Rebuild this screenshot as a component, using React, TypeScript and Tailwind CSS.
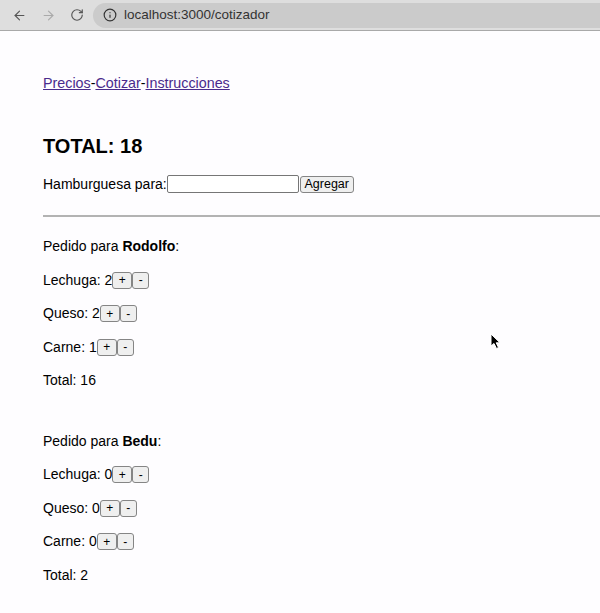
import { ArrowLeft, ArrowRight, RotateCw, Info } from "lucide-react";

type Pedido = {
    nombre: string;
    lechuga: number;
    queso: number;
    carne: number;
    total: number;
};

const pedidos: Pedido[] = [
    { nombre: "Rodolfo", lechuga: 2, queso: 2, carne: 1, total: 16 },
    { nombre: "Bedu", lechuga: 0, queso: 0, carne: 0, total: 2 },
];

function Btn({ label, w }: { label: string; w: string }) {
    return (
        <button
            className={`${w} h-[17px] bg-[#efefef] border border-[#858585] rounded-[3px] text-[12px] leading-none text-black flex items-center justify-center`}
        >
            {label}
        </button>
    );
}

function Ingrediente({ nombre, cantidad }: { nombre: string; cantidad: number }) {
    return (
        <div className="mt-[16.5px] h-[17px] flex items-center">
            <span>
                {nombre}: {cantidad}
            </span>
            <Btn label="+" w="w-[20px]" />
            <Btn label="-" w="w-[17px]" />
        </div>
    );
}

function BrowserBar() {
    return (
        <div className="h-[31px] bg-[#dedede] border-b border-[#a9a9a9] flex items-center">
            <div className="flex items-center gap-[14px] pl-[12px] text-[#555]">
                <ArrowLeft size={15} strokeWidth={1.8} />
                <ArrowRight size={15} strokeWidth={1.8} className="text-[#aaa]" />
                <RotateCw size={14} strokeWidth={2} />
            </div>
            <div className="ml-[9px] flex-1 h-[25px] bg-[#cbcbcb] rounded-l-full flex items-center pl-[10px] gap-[7px] text-[#333]">
                <Info size={14} strokeWidth={2} />
                <span className="text-[13.5px]">localhost:3000/cotizador</span>
            </div>
        </div>
    );
}

export default function App() {
    return (
        <div className="relative w-[600px] h-[613px] bg-[#fefdff] overflow-hidden font-['Liberation_Sans',Arial,sans-serif] text-[14px] text-black">
            <BrowserBar />
            <div className="pl-[43px]">
                <div className="mt-[44px] h-[17px] leading-[17px] text-[14.3px]">
                    <a href="#" className="underline text-[#4a2b8c]">Precios</a>-
                    <a href="#" className="underline text-[#4a2b8c]">Cotizar</a>-
                    <a href="#" className="underline text-[#4a2b8c]">Instrucciones</a>
                </div>
                <h1 className="mt-[42px] h-[24px] leading-[24px] text-[20px] font-bold">TOTAL: 18</h1>
                <div className="mt-[17px] h-[18px] flex items-center">
                    <span>Hamburguesa para:</span>
                    <input
                        type="text"
                        className="w-[132px] h-[18px] border border-[#767676] rounded-[2px] bg-white"
                    />
                    <button className="ml-[1px] w-[54px] h-[17px] bg-[#efefef] border border-[#858585] rounded-[3px] text-[12.5px] leading-none flex items-center justify-center">
                        Agregar
                    </button>
                </div>
            </div>
            <hr className="ml-[43px] mt-[22px] border-0 border-t-2 border-[#b3b3b3]" />
            <div className="pl-[43px]">
                {pedidos.map((p, i) => (
                    <div key={p.nombre} className={i === 0 ? "mt-[21px]" : "mt-[43.5px]"}>
                        <div className="h-[17px] leading-[17px]">
                            Pedido para <b>{p.nombre}</b>:
                        </div>
                        <Ingrediente nombre="Lechuga" cantidad={p.lechuga} />
                        <Ingrediente nombre="Queso" cantidad={p.queso} />
                        <Ingrediente nombre="Carne" cantidad={p.carne} />
                        <div className="mt-[16.5px] h-[17px] leading-[17px]">Total: {p.total}</div>
                    </div>
                ))}
            </div>
            <svg className="absolute left-[490px] top-[333px]" width="12" height="17" viewBox="0 0 12 17">
                <path d="M1 1 L1 13 L4 10.5 L6.5 15.5 L8.5 14.5 L6.2 9.8 L10 9.8 Z" fill="#000" stroke="#fff" strokeWidth="1" />
            </svg>
        </div>
    );
}
